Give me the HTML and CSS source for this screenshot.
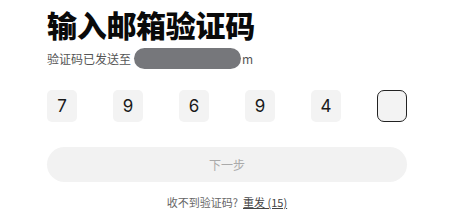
FILE: index.html
```html
<!DOCTYPE html>
<html lang="zh">
<head>
<meta charset="utf-8">
<link rel="stylesheet" href="styles.css">
</head>
<body>
<div class="page">
  <h1 class="title">输入邮箱验证码</h1>
  <div class="sub">验证码已发送至<span class="mask"></span>m</div>
  <div class="codes">
    <div class="cell">7</div>
    <div class="cell">9</div>
    <div class="cell">6</div>
    <div class="cell">9</div>
    <div class="cell">4</div>
    <div class="cell active"></div>
  </div>
  <button class="next" type="button">下一步</button>
  <div class="resend">收不到验证码?&nbsp; <span class="link">重发 (15)</span></div>
</div>
</body>
</html>
```

FILE: styles.css
```css
html, body {
  margin: 0;
  padding: 0;
  background: #fff;
}
body {
  font-family: "Noto Sans CJK SC", "Noto Sans", sans-serif;
  color: #111;
}
.page {
  width: 360px;
  padding: 4px 0 0 47px;
  display: flex;
  flex-direction: column;
}
.title {
  margin: 0;
  font-size: 30px;
  font-weight: 900;
  line-height: 40px;
  letter-spacing: -0.3px;
  color: #0a0a0a;
}
.sub {
  margin-top: 4px;
  display: flex;
  align-items: center;
  font-size: 12px;
  color: #555;
  height: 20px;
}
.mask {
  display: inline-block;
  width: 107px;
  height: 21px;
  border-radius: 11px;
  background: #76777b;
  margin: 0 1px 0 3px;
}
.codes {
  margin-top: 22px;
  display: flex;
  justify-content: space-between;
}
.cell {
  width: 30px;
  height: 32px;
  box-sizing: border-box;
  border-radius: 5px;
  background: #f3f3f3;
  display: flex;
  align-items: center;
  justify-content: center;
  font-family: Inter, "Noto Sans", sans-serif;
  font-size: 17px;
  color: #1a1a1a;
}
.cell.active {
  border: 1px solid #222;
  border-radius: 7px;
  background: #f3f3f3;
}
.next {
  margin-top: 25px;
  height: 35px;
  width: 360px;
  border: none;
  border-radius: 18px;
  background: #f2f2f2;
  color: #aaa;
  font-family: "Noto Sans CJK SC", sans-serif;
  font-size: 12px;
}
.resend {
  margin-top: 12px;
  text-align: center;
  font-size: 11px;
  color: #666;
}
.link {
  color: #444;
  text-decoration: underline;
}
```
